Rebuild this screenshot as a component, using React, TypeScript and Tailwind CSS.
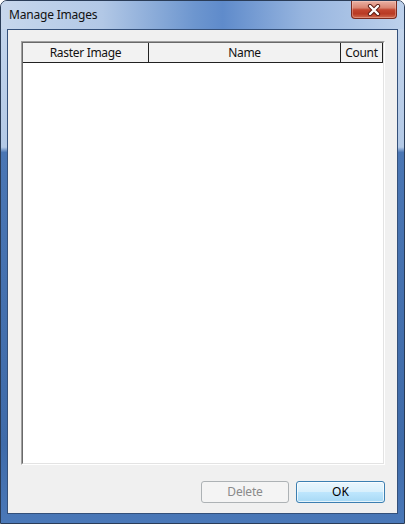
export default function App() {
  return (
    <div className="w-[405px] h-[524px] flex flex-col overflow-hidden rounded-t-[7px] border border-[#2a3c57] font-['Noto_Sans',sans-serif] text-[11px] text-black bg-[linear-gradient(180deg,#c6d7ed_0%,#b3c9e6_28%,#4a76b4_29%,#3f6ba9_85%,#4a78b8_100%)]">
      {/* Title bar */}
      <div className="h-[28px] flex items-start justify-between pl-[8px] pr-[7px] bg-[linear-gradient(90deg,#c7d7ec_0%,#b2c8e6_25%,#6d96cf_48%,#5f8bcb_55%,#97b5df_75%,#bdd1ec_100%)]">
        <span className="mt-[5px] leading-[18px] text-[12px] text-[#111] tracking-[-0.2px]">Manage Images</span>
        <div className="w-[46px] h-[18px] rounded-b-[4px] border border-t-0 border-[#7a2a1f] flex items-center justify-center bg-[linear-gradient(180deg,#eab1a4_0%,#d98572_40%,#c2452f_52%,#b83a24_75%,#d06a50_100%)] shadow-[inset_0_0_0_1px_rgba(255,220,210,0.35)]">
          <svg width="14" height="12" viewBox="0 0 14 12">
            <path d="M3 2 L11 10 M11 2 L3 10" stroke="#5a1a12" strokeWidth="4.2" strokeLinecap="round" />
            <path d="M3 2 L11 10 M11 2 L3 10" stroke="#ffffff" strokeWidth="2.4" strokeLinecap="round" />
          </svg>
        </div>
      </div>
      {/* Frame + client */}
      <div className="flex-1 flex flex-col px-[6px] pb-[9px]">
        <div className="flex-1 flex flex-col border border-[#34507a] bg-[#f0f0f0] pl-[13px] pr-[12px] pt-[11px] pb-[10px]">
          {/* List box */}
          <div className="h-[424px] flex flex-col border border-t-[#a0a0a0] border-l-[#a0a0a0] border-b-[#ffffff] border-r-[#ffffff]">
            <div className="flex-1 flex flex-col bg-white border border-t-[#696969] border-l-[#696969] border-b-[#e3e3e3] border-r-[#e3e3e3]">
              <div className="h-[20px] flex border-b border-[#222] bg-[#f2f2f2] text-[#111] text-[12px] tracking-[-0.3px]">
                <div className="w-[126px] border-r border-[#222] flex items-center justify-center">Raster Image</div>
                <div className="w-[192px] border-r border-[#222] flex items-center justify-center">Name</div>
                <div className="w-[42px] border-r border-[#222] flex items-center justify-center overflow-hidden whitespace-nowrap">Count</div>
              </div>
              <div className="flex-1 bg-white" />
            </div>
          </div>
          <div className="flex-1" />
          {/* Buttons */}
          <div className="flex justify-end gap-[7px]">
            <button className="w-[88px] h-[22px] rounded-[3px] border border-[#adb2b5] bg-[#f4f4f4] text-[#8a8a8a] text-[12px] tracking-[-0.2px] flex items-center justify-center leading-none">
              Delete
            </button>
            <button className="w-[89px] h-[22px] rounded-[3px] border border-[#3c7fb1] text-black text-[12px] flex items-center justify-center leading-none bg-[linear-gradient(180deg,#eaf6fd_0%,#d9f0fc_48%,#bee6fd_52%,#a7d9f5_100%)] shadow-[inset_0_0_0_1px_rgba(255,255,255,0.7)]">
              OK
            </button>
          </div>
        </div>
      </div>
    </div>
  );
}
